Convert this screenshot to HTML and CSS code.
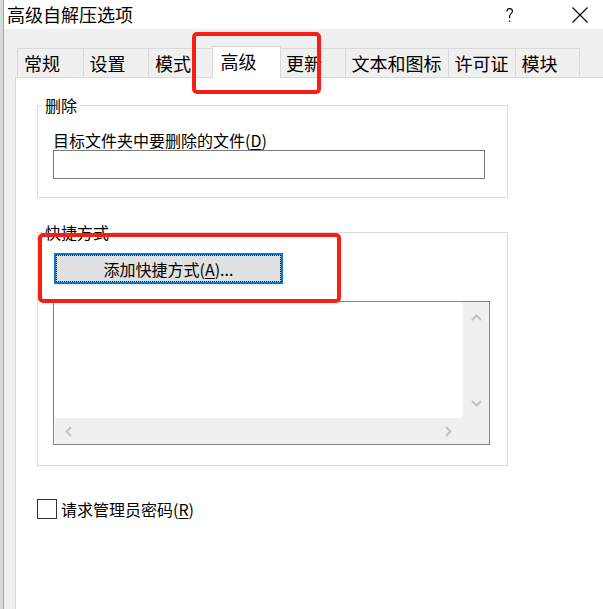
FILE: index.html
```html
<!DOCTYPE html>
<html lang="zh-CN">
<head>
  <meta charset="UTF-8">
  <title>高级自解压选项</title>
  <link rel="stylesheet" href="styles.css">
</head>
<body>
  <div class="window">
    <div class="titlebar">
      <span class="title">高级自解压选项</span>
      <span class="cap help">
        <svg width="8" height="15" viewBox="0 0 8 15">
          <path d="M0.9 3.4 C0.9 1.7 2.1 0.6 3.6 0.6 C5.1 0.6 6.4 1.7 6.4 3.3 C6.4 4.7 5.5 5.4 4.6 6.1 C3.8 6.7 3.6 7.4 3.6 8.6 V10.2" fill="none" stroke="#000" stroke-width="1.1"/>
          <circle cx="3.6" cy="13.2" r="0.8" fill="#000"/>
        </svg>
      </span>
      <span class="cap close">
        <svg width="16" height="16" viewBox="0 0 16 16">
          <path d="M0.5 0.5 L15.5 15.5 M15.5 0.5 L0.5 15.5" stroke="#000" stroke-width="1.1"/>
        </svg>
      </span>
    </div>

    <div class="tabs">
      <div class="tab">常规</div>
      <div class="tab">设置</div>
      <div class="tab">模式</div>
      <div class="tab active">高级</div>
      <div class="tab">更新</div>
      <div class="tab">文本和图标</div>
      <div class="tab">许可证</div>
      <div class="tab">模块</div>
    </div>

    <div class="panel">
      <fieldset class="group group-delete">
        <legend>删除</legend>
        <label class="field-label">目标文件夹中要删除的文件(<u>D</u>)</label>
        <div class="textbox"></div>
      </fieldset>

      <fieldset class="group group-shortcut">
        <legend>快捷方式</legend>
        <button class="btn">添加快捷方式(<u>A</u>)...</button>
        <div class="listbox">
          <div class="list-area"></div>
          <div class="vscroll">
            <svg width="11" height="7" viewBox="0 0 11 7"><polyline points="1,6 5.5,1.5 10,6" fill="none" stroke="#c2c2c2" stroke-width="2"/></svg>
            <svg width="11" height="7" viewBox="0 0 11 7"><polyline points="1,1 5.5,5.5 10,1" fill="none" stroke="#c2c2c2" stroke-width="2"/></svg>
          </div>
          <div class="hscroll">
            <svg width="7" height="11" viewBox="0 0 7 11"><polyline points="6,1 1.5,5.5 6,10" fill="none" stroke="#c2c2c2" stroke-width="2"/></svg>
            <svg width="7" height="11" viewBox="0 0 7 11"><polyline points="1,1 5.5,5.5 1,10" fill="none" stroke="#c2c2c2" stroke-width="2"/></svg>
          </div>
          <div class="corner"></div>
        </div>
      </fieldset>

      <label class="check"><span class="box"></span><span>请求管理员密码(<u>R</u>)</span></label>
    </div>
  </div>

  <!-- annotation marks -->
  <div class="mark mark-tab"></div>
  <div class="mark mark-button"></div>
</body>
</html>
```

FILE: styles.css
```css
/* General */
* {
  box-sizing: border-box;
}

body {
  margin: 0;
  background: #dadada;
  color: #000;
  font-family: "Noto Sans CJK SC", "Noto Sans", sans-serif;
  font-size: 16px;
  overflow: hidden;
}

u {
  text-decoration: underline;
  text-underline-offset: 2px;
}

.window {
  margin-left: 3px;
  border-left: 1px solid #a3a3a3;
  background: #f0f0f0;
  min-height: 100vh;
  display: flex;
  flex-direction: column;
}

/* Title bar */
.titlebar {
  display: flex;
  align-items: center;
  height: 29px;
  background: #fff;
  padding-left: 3px;
}

.title {
  flex: 1;
  font-size: 18px;
  line-height: 29px;
}

.cap {
  width: 46px;
  height: 29px;
  display: flex;
  align-items: center;
  justify-content: center;
}

.help {
  margin-right: 24px;
  padding-top: 2px;
}

.close {
  padding-top: 1px;
}

/* Tabs */
.tabs {
  display: flex;
  align-items: flex-end;
  height: 48px;
  padding-left: 13px;
}

.tab {
  min-width: 65.5px;
  height: 29px;
  padding: 0 6px;
  border: 1px solid #d9d9d9;
  border-right: none;
  border-bottom: none;
  font-size: 18px;
  line-height: 28px;
  white-space: nowrap;
}

.tab:last-child {
  border-right: 1px solid #d9d9d9;
}

.tab.active {
  position: relative;
  z-index: 1;
  min-width: 69.5px;
  height: 32px;
  margin: 0 -2px -1px;
  padding-left: 8px;
  border-right: 1px solid #d9d9d9;
  background: #fff;
}

/* Panel */
.panel {
  flex: 1;
  margin-left: 11px;
  border-left: 1px solid #d9d9d9;
  border-top: 1px solid #d9d9d9;
  background: #fff;
  padding: 17px 0 0 21px;
}

.group {
  width: 471px;
  margin: 0;
  border: 1px solid #dcdcdc;
  min-width: 0;
}

.group legend {
  margin-left: -11px;
  padding: 0 3px;
  line-height: 20px;
}

.group-delete {
  padding: 15px 22px 18px 15px;
}

.field-label {
  display: block;
  line-height: 20px;
}

.textbox {
  width: 432px;
  height: 29px;
  border: 1px solid #7a7a7a;
  background: #fff;
}

.group-shortcut {
  margin-top: 24px;
  padding: 11px 17px 20px 15px;
}

.btn {
  display: block;
  width: 229px;
  height: 31px;
  margin-left: 1px;
  border: 2px solid #0078d7;
  outline: 1px dotted #000;
  outline-offset: -3px;
  background: #e1e1e1;
  font: inherit;
  line-height: 20px;
  color: #000;
  padding: 0;
}

.listbox {
  width: 437px;
  height: 144px;
  margin-top: 17px;
  border: 1px solid #828282;
  padding-left: 1px;
  display: grid;
  grid-template-columns: 1fr 26px;
  grid-template-rows: 1fr 26px;
  background: #fff;
}

.list-area {
  background: #fff;
}

.vscroll,
.hscroll,
.corner {
  background: #f0f0f0;
}

.vscroll {
  display: flex;
  flex-direction: column;
  align-items: center;
  justify-content: space-between;
  padding: 12px 0 11px;
}

.hscroll {
  display: flex;
  align-items: center;
  justify-content: space-between;
  padding: 0 11px 0 10px;
}

/* Checkbox */
.check {
  display: flex;
  align-items: center;
  gap: 4px;
  margin: 33px 0 0;
  line-height: 20px;
}

.check .box {
  width: 20px;
  height: 20px;
  border: 1px solid #333;
  background: #fff;
}

/* Red annotation rectangles */
.mark {
  position: absolute;
  border: 4px solid #f81e14;
  border-radius: 5px;
}

.mark-tab {
  left: 192px;
  top: 32px;
  width: 129px;
  height: 62px;
}

.mark-button {
  left: 38px;
  top: 233px;
  width: 303px;
  height: 70px;
}
```
